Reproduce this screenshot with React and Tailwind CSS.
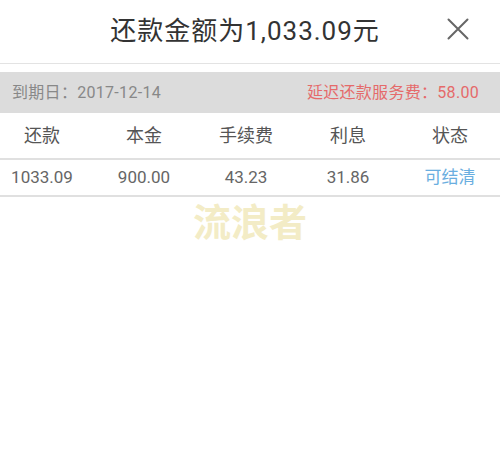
export default function App() {
  return (
    <div className="w-[500px] h-[458px] bg-white relative overflow-hidden font-['Roboto','Noto_Sans_CJK_SC',sans-serif]">
      <div className="h-[64px] flex items-center justify-center relative border-b border-[#e3e3e3]">
        <div className="text-[26px] tracking-[1px] text-[#333] pr-[10px]">还款金额为1,033.09元</div>
        <button className="absolute right-[30px] top-[17px] w-[24px] h-[24px] flex items-center justify-center">
          <svg width="22" height="22" viewBox="0 0 22 22" fill="none" stroke="#666" strokeWidth="2" strokeLinecap="round">
            <path d="M1.5 1.5 L20.5 20.5 M20.5 1.5 L1.5 20.5" />
          </svg>
        </button>
      </div>
      <div className="mt-[8px] h-[41px] bg-[#dcdcdc] flex items-center justify-between pl-[12px] pr-[21px] text-[16px] tracking-[0.3px]">
        <span className="text-[#888]">到期日：2017-12-14</span>
        <span className="text-[#e56a6a]">延迟还款服务费：58.00</span>
      </div>
      <div className="border-b-2 border-[#e0e0e0]">
        <div className="grid grid-cols-5 gap-x-[18px] w-[492px] h-[45px] items-center text-center text-[18px] text-[#555]">
          <span>还款</span>
          <span>本金</span>
          <span>手续费</span>
          <span>利息</span>
          <span>状态</span>
        </div>
      </div>
      <div className="border-b-2 border-[#e0e0e0]">
        <div className="grid grid-cols-5 gap-x-[18px] w-[492px] h-[35px] items-center text-center text-[17px] text-[#666]">
          <span>1033.09</span>
          <span>900.00</span>
          <span>43.23</span>
          <span>31.86</span>
          <span className="text-[#6aaee0]">可结清</span>
        </div>
      </div>
      <div className="flex justify-center mt-[3px]">
        <span className="text-[38px] font-bold text-[#f3ecc6] leading-[46px]">流浪者</span>
      </div>
    </div>
  );
}
